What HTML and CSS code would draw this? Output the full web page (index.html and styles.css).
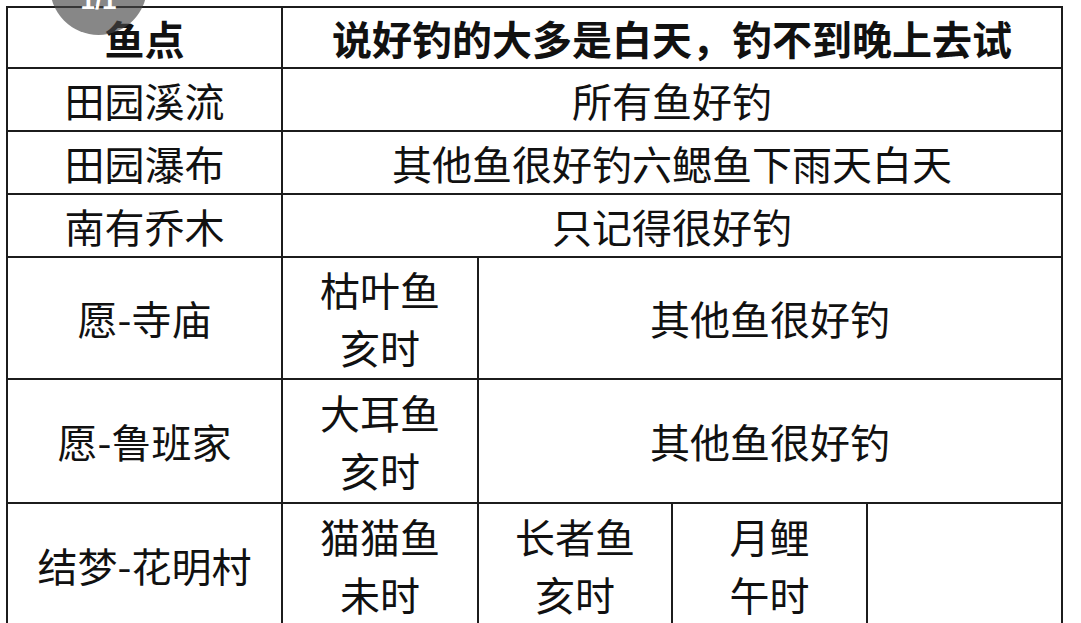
FILE: index.html
```html
<!DOCTYPE html>
<html lang="zh-CN">
<head>
<meta charset="utf-8">
<title>鱼点</title>
<link rel="stylesheet" href="styles.css">
</head>
<body>
<div class="page">
  <div class="badge"><span class="badge-text">1/1</span></div>
  <table class="fish">
    <colgroup>
      <col class="c-place">
      <col class="c-a">
      <col class="c-b">
      <col class="c-c">
      <col class="c-d">
    </colgroup>
    <tr class="r-head">
      <th>鱼点</th>
      <th colspan="4">说好钓的大多是白天，钓不到晚上去试</th>
    </tr>
    <tr class="r-one">
      <td>田园溪流</td>
      <td colspan="4">所有鱼好钓</td>
    </tr>
    <tr class="r-one">
      <td>田园瀑布</td>
      <td colspan="4">其他鱼很好钓六鳃鱼下雨天白天</td>
    </tr>
    <tr class="r-one">
      <td>南有乔木</td>
      <td colspan="4">只记得很好钓</td>
    </tr>
    <tr class="r-two">
      <td>愿-寺庙</td>
      <td>枯叶鱼<br>亥时</td>
      <td colspan="3">其他鱼很好钓</td>
    </tr>
    <tr class="r-two r-tall">
      <td>愿-鲁班家</td>
      <td>大耳鱼<br>亥时</td>
      <td colspan="3">其他鱼很好钓</td>
    </tr>
    <tr class="r-two r-tall">
      <td>结梦-花明村</td>
      <td>猫猫鱼<br>未时</td>
      <td>长者鱼<br>亥时</td>
      <td>月鲤<br>午时</td>
      <td></td>
    </tr>
  </table>
</div>
</body>
</html>
```

FILE: styles.css
```css
html, body {
  margin: 0;
  padding: 0;
  background: #ffffff;
}

.page {
  position: relative;
  width: 1081px;
  height: 623px;
  overflow: hidden;
  padding: 6px 0 0 6px;
  box-sizing: border-box;
}

.fish {
  border-collapse: collapse;
  table-layout: fixed;
  width: 1057px;
  font-family: "Noto Sans CJK SC", "Noto Sans", sans-serif;
  font-size: 40px;
  color: #111111;
}

.c-place { width: 275px; }
.c-a { width: 196px; }
.c-b { width: 194px; }
.c-c { width: 195px; }
.c-d { width: 195px; }

.fish th,
.fish td {
  border: 2px solid #1c1c1c;
  padding: 0;
  text-align: center;
  vertical-align: middle;
  line-height: 58px;
  white-space: nowrap;
}

.fish th {
  font-weight: 700;
}

.r-head { height: 61px; }
.r-one { height: 63px; }
.r-two { height: 122px; }
.r-tall { height: 124px; }

.badge {
  position: absolute;
  left: 50px;
  top: -62px;
  width: 97px;
  height: 97px;
  border-radius: 50%;
  background: rgba(70, 70, 70, 0.65);
  display: flex;
  justify-content: center;
  align-items: flex-end;
  z-index: 2;
}

.badge-text {
  font-family: "Liberation Sans", sans-serif;
  font-weight: 700;
  font-size: 26px;
  line-height: 26px;
  color: #ffffff;
  margin-bottom: 22px;
}
```
